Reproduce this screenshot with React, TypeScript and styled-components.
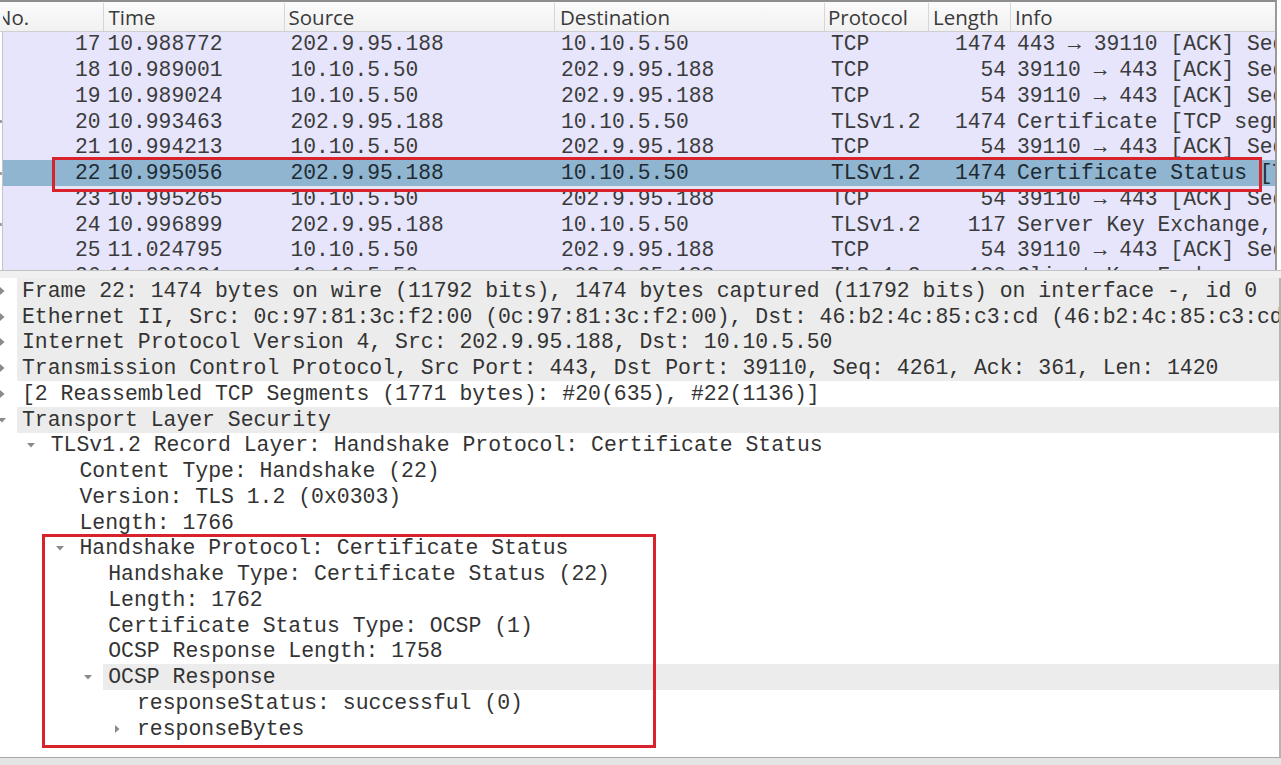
import React from "react";
import styled, { createGlobalStyle } from "styled-components";

const GlobalStyle = createGlobalStyle`
  html, body { margin: 0; padding: 0; background: #ffffff; }
  body { font-family: "Liberation Mono", monospace; }
`;

const MONO = `"Liberation Mono", "DejaVu Sans Mono", monospace`;
const SANS = `"Open Sans", "Noto Sans", sans-serif`;
const ROW_H = 25.75;
const COLS = "3px 100.5px 181px 270.5px 270px 104px 82px 1fr";

const Page = styled.div`
  width: 1281px;
  height: 765px;
  display: flex;
  flex-direction: column;
  overflow: hidden;
  background: #ffffff;
`;

const PacketList = styled.div`
  height: 270px;
  flex: none;
  display: flex;
  flex-direction: column;
  border-top: 2px solid #8d8d8d;
  border-right: 2px solid #9a9a9a;
  width: 1277px;
  overflow: hidden;
  box-sizing: border-box;
`;

const HeaderRow = styled.div`
  display: grid;
  grid-template-columns: ${COLS};
  height: 28.5px;
  flex: none;
  background: linear-gradient(#fbfbfb, #f1f1f1);
  border-bottom: 1px solid #cfcfcf;
  font-family: ${SANS};
  font-size: 20.5px;
  color: #3a3a3a;
`;

const HeaderCell = styled.div<{ $offset?: number; $last?: boolean }>`
  display: flex;
  align-items: center;
  padding-left: ${(p) => p.$offset ?? 6}px;
  border-right: ${(p) => (p.$last ? "none" : "1px solid #d6d6d6")};
  white-space: nowrap;
  overflow: hidden;
  margin-top: 1px;
`;

const HeaderText = styled.span<{ $shift?: number }>`
  margin-left: ${(p) => p.$shift ?? 0}px;
`;

const ListBody = styled.div`
  flex: 1;
  overflow: hidden;
`;

const PacketRow = styled.div<{ $selected?: boolean }>`
  position: relative;
  display: grid;
  grid-template-columns: ${COLS};
  height: ${ROW_H}px;
  align-items: center;
  font-family: ${MONO};
  font-size: 21.3px;
  color: ${(p) => (p.$selected ? "#1f2b33" : "#3b3b3b")};
  white-space: nowrap;
`;

const Gutter = styled.div`
  align-self: stretch;
  background: #ffffff;
  border-right: 1px solid #c4c4c4;
  display: flex;
  align-items: center;
`;

const Marker = styled.span`
  display: block;
  width: 5px;
  height: 3px;
  border-radius: 1px;
  background: #9a9a9a;
  margin-left: -1px;
`;

const Cell = styled.div<{ $align?: "left" | "right"; $bg: string; $pad?: number }>`
  align-self: stretch;
  display: flex;
  align-items: center;
  justify-content: ${(p) => (p.$align === "right" ? "flex-end" : "flex-start")};
  padding: 0 ${(p) => (p.$align === "right" ? p.$pad ?? 4 : 0)}px 0
    ${(p) => (p.$align === "right" ? 0 : p.$pad ?? 6)}px;
  background: ${(p) => p.$bg};
  overflow: hidden;
`;

const RedFrame = styled.div<{ $left: number; $top: number; $width: number; $height: number }>`
  position: absolute;
  left: ${(p) => p.$left}px;
  top: ${(p) => p.$top}px;
  width: ${(p) => p.$width}px;
  height: ${(p) => p.$height}px;
  border: 3px solid #d8222c;
  box-sizing: border-box;
  pointer-events: none;
  z-index: 2;
`;

const Splitter = styled.div`
  height: 7px;
  flex: none;
  background: #f0f0f0;
  border-top: 1px solid #c2c2c2;
`;

const DetailPane = styled.div`
  flex: 1;
  width: 1279px;
  border-right: 2px solid #b5b5b5;
  overflow: hidden;
  background: #ffffff;
`;

const DetailRow = styled.div`
  display: flex;
  height: ${ROW_H}px;
  font-family: ${MONO};
  font-size: 21.45px;
  color: #333333;
  white-space: nowrap;
`;

const DetailGutter = styled.div<{ $level: number }>`
  flex: none;
  width: ${(p) => 17 + p.$level * 28.75}px;
  display: flex;
  justify-content: flex-end;
  align-items: center;
  padding-right: 11px;
  box-sizing: border-box;
`;

const ArrowBox = styled.div`
  flex: none;
  width: 8px;
  height: 8px;
  display: flex;
  align-items: center;
  justify-content: center;
`;

const DetailLabel = styled.div<{ $gray?: boolean }>`
  flex: 1;
  display: flex;
  align-items: center;
  padding-left: 5px;
  background: ${(p) => (p.$gray ? "#ececec" : "transparent")};
  overflow: hidden;
`;

const Group = styled.div`
  position: relative;
`;

const HScroll = styled.div`
  height: 7px;
  flex: none;
  background: #e4e4e4;
  border-top: 1px solid #a9a9a9;
`;

type Packet = {
  no: number;
  time: string;
  src: string;
  dst: string;
  proto: string;
  len: number;
  info: string;
  marker?: boolean;
  selected?: boolean;
};

const packets: Packet[] = [
  { no: 17, time: "10.988772", src: "202.9.95.188", dst: "10.10.5.50", proto: "TCP", len: 1474, info: "443 → 39110 [ACK] Seq=1421 Ack=361 Win=30080 Len=1420" },
  { no: 18, time: "10.989001", src: "10.10.5.50", dst: "202.9.95.188", proto: "TCP", len: 54, info: "39110 → 443 [ACK] Seq=361 Ack=2841 Win=64240 Len=0" },
  { no: 19, time: "10.989024", src: "10.10.5.50", dst: "202.9.95.188", proto: "TCP", len: 54, info: "39110 → 443 [ACK] Seq=361 Ack=2841 Win=64240 Len=0" },
  { no: 20, time: "10.993463", src: "202.9.95.188", dst: "10.10.5.50", proto: "TLSv1.2", len: 1474, info: "Certificate [TCP segment of a reassembled PDU]", marker: true },
  { no: 21, time: "10.994213", src: "10.10.5.50", dst: "202.9.95.188", proto: "TCP", len: 54, info: "39110 → 443 [ACK] Seq=361 Ack=4261 Win=64240 Len=0" },
  { no: 22, time: "10.995056", src: "202.9.95.188", dst: "10.10.5.50", proto: "TLSv1.2", len: 1474, info: "Certificate Status [TCP segment of a reassembled PDU]", marker: true, selected: true },
  { no: 23, time: "10.995265", src: "10.10.5.50", dst: "202.9.95.188", proto: "TCP", len: 54, info: "39110 → 443 [ACK] Seq=361 Ack=5681 Win=64240 Len=0" },
  { no: 24, time: "10.996899", src: "202.9.95.188", dst: "10.10.5.50", proto: "TLSv1.2", len: 117, info: "Server Key Exchange, Server Hello Done", marker: true },
  { no: 25, time: "11.024795", src: "10.10.5.50", dst: "202.9.95.188", proto: "TCP", len: 54, info: "39110 → 443 [ACK] Seq=361 Ack=5744 Win=64240 Len=0" },
  { no: 26, time: "11.030081", src: "10.10.5.50", dst: "202.9.95.188", proto: "TLSv1.2", len: 180, info: "Client Key Exchange, Change Cipher Spec, Encrypted Handshake Message" },
];

type Node = { level: number; text: string; arrow?: "right" | "down"; gray?: boolean };

const topNodes: Node[] = [
  { level: 0, arrow: "right", gray: true, text: "Frame 22: 1474 bytes on wire (11792 bits), 1474 bytes captured (11792 bits) on interface -, id 0" },
  { level: 0, arrow: "right", gray: true, text: "Ethernet II, Src: 0c:97:81:3c:f2:00 (0c:97:81:3c:f2:00), Dst: 46:b2:4c:85:c3:cd (46:b2:4c:85:c3:cd)" },
  { level: 0, arrow: "right", gray: true, text: "Internet Protocol Version 4, Src: 202.9.95.188, Dst: 10.10.5.50" },
  { level: 0, arrow: "right", gray: true, text: "Transmission Control Protocol, Src Port: 443, Dst Port: 39110, Seq: 4261, Ack: 361, Len: 1420" },
  { level: 0, arrow: "right", text: "[2 Reassembled TCP Segments (1771 bytes): #20(635), #22(1136)]" },
  { level: 0, arrow: "down", gray: true, text: "Transport Layer Security" },
  { level: 1, arrow: "down", text: "TLSv1.2 Record Layer: Handshake Protocol: Certificate Status" },
  { level: 2, text: "Content Type: Handshake (22)" },
  { level: 2, text: "Version: TLS 1.2 (0x0303)" },
  { level: 2, text: "Length: 1766" },
];

const groupNodes: Node[] = [
  { level: 2, arrow: "down", text: "Handshake Protocol: Certificate Status" },
  { level: 3, text: "Handshake Type: Certificate Status (22)" },
  { level: 3, text: "Length: 1762" },
  { level: 3, text: "Certificate Status Type: OCSP (1)" },
  { level: 3, text: "OCSP Response Length: 1758" },
  { level: 3, arrow: "down", gray: true, text: "OCSP Response" },
  { level: 4, text: "responseStatus: successful (0)" },
  { level: 4, arrow: "right", text: "responseBytes" },
];

const Arrow: React.FC<{ dir: "right" | "down" }> = ({ dir }) => (
  <svg width="8" height="8" viewBox="0 0 8 8">
    {dir === "right" ? (
      <polygon points="2,0 6.5,4 2,8" fill="#8a8a8a" />
    ) : (
      <polygon points="0,2 8,2 4,6.5" fill="#8a8a8a" />
    )}
  </svg>
);

const TreeRow: React.FC<{ node: Node }> = ({ node }) => (
  <DetailRow>
    <DetailGutter $level={node.level}>
      <ArrowBox>{node.arrow && <Arrow dir={node.arrow} />}</ArrowBox>
    </DetailGutter>
    <DetailLabel $gray={node.gray}>{node.text}</DetailLabel>
  </DetailRow>
);

const PacketLine: React.FC<{ p: Packet }> = ({ p }) => {
  const bg = p.selected ? "#8fb5d0" : "#e6e5fb";
  return (
    <PacketRow $selected={p.selected}>
      <Gutter>{p.marker && <Marker />}</Gutter>
      <Cell $bg={bg} $align="right" $pad={3}>{p.no}</Cell>
      <Cell $bg={bg} $pad={4}>{p.time}</Cell>
      <Cell $bg={bg}>{p.src}</Cell>
      <Cell $bg={bg}>{p.dst}</Cell>
      <Cell $bg={bg}>{p.proto}</Cell>
      <Cell $bg={bg} $align="right" $pad={5}>{p.len}</Cell>
      <Cell $bg={bg}>{p.info}</Cell>
      {p.selected && <RedFrame $left={52} $top={-3} $width={1210} $height={35} />}
    </PacketRow>
  );
};

export default function App() {
  return (
    <Page>
      <GlobalStyle />
      <PacketList>
        <HeaderRow>
          <HeaderCell $offset={0} $last />
          <HeaderCell $offset={0}>
            <HeaderText $shift={-7}>No.</HeaderText>
          </HeaderCell>
          <HeaderCell $offset={5}>Time</HeaderCell>
          <HeaderCell $offset={4}>Source</HeaderCell>
          <HeaderCell $offset={5}>Destination</HeaderCell>
          <HeaderCell $offset={3}>Protocol</HeaderCell>
          <HeaderCell $offset={4}>Length</HeaderCell>
          <HeaderCell $offset={4} $last>Info</HeaderCell>
        </HeaderRow>
        <ListBody>
          {packets.map((p) => (
            <PacketLine key={p.no} p={p} />
          ))}
        </ListBody>
      </PacketList>
      <Splitter />
      <DetailPane>
        {topNodes.map((n, i) => (
          <TreeRow key={i} node={n} />
        ))}
        <Group>
          {groupNodes.map((n, i) => (
            <TreeRow key={i} node={n} />
          ))}
          <RedFrame $left={42} $top={-2} $width={614} $height={214} />
        </Group>
      </DetailPane>
      <HScroll />
    </Page>
  );
}
